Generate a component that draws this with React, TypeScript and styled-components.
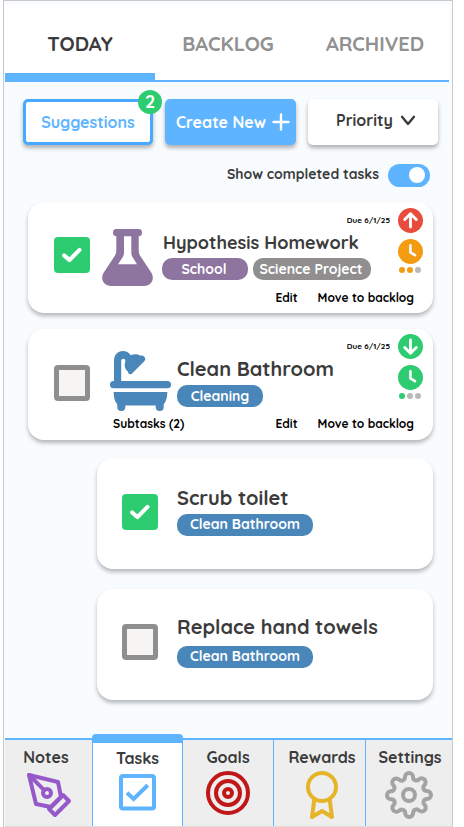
import React from 'react';
import styled, { createGlobalStyle } from 'styled-components';

const c = {
  blue: '#5eb4ff',
  blueEdge: '#47a9ff',
  page: '#f8fcff',
  ink: '#3b3b3b',
  muted: '#919191',
  green: '#2ecc71',
  red: '#e74c3c',
  orange: '#f39c12',
  purple: '#8e759f',
  steel: '#4986b9',
  tagGray: '#908e8f',
  dot: '#b9b9b9',
};

const GlobalStyle = createGlobalStyle`
  * { box-sizing: border-box; }
  body { margin: 0; background: #fff; }
  button { font: inherit; color: inherit; border: 0; padding: 0; background: none; }
  svg { display: block; flex: none; }
`;

const Frame = styled.div`
  display: flex;
  flex-direction: column;
  width: 450px;
  height: 827px;
  margin-left: 3px;
  border: 1px solid #c9c9cb;
  border-bottom-color: #dcdcdc;
  padding-left: 1px;
  background: ${c.page};
  color: ${c.ink};
  font-family: Quicksand, Lato, sans-serif;
  font-weight: 700;
  overflow: hidden;
`;

const Tabs = styled.nav`
  display: grid;
  grid-template-columns: 150px 147px 147px;
  flex: none;
  width: 444px;
  height: 78px;
  margin-top: 3px;
  background: #fff;
`;

const Tab = styled.button<{ $active?: boolean }>`
  padding-top: ${p => (p.$active ? 10 : 8)}px;
  padding-right: ${p => (p.$active ? 0 : 1)}px;
  padding-bottom: ${p => (p.$active ? 0 : 5)}px;
  border-bottom: ${p => (p.$active ? 9 : 2)}px solid ${c.blue};
  font-size: 20px;
  line-height: 25px;
  color: ${p => (p.$active ? c.ink : c.muted)};
`;

const Toolbar = styled.div`
  display: flex;
  gap: 12px;
  flex: none;
  padding: 17px 0 0 18px;
`;

const ToolButton = styled.button<{ $kind: 'outline' | 'solid' | 'plain' }>`
  position: relative;
  display: flex;
  align-items: center;
  justify-content: center;
  width: ${p => (p.$kind === 'solid' ? 131 : 130)}px;
  height: 46px;
  padding-bottom: ${p => (p.$kind === 'plain' ? 4 : 0)}px;
  padding-left: ${p => (p.$kind === 'plain' ? 6 : p.$kind === 'solid' ? 5 : 0)}px;
  gap: ${p => (p.$kind === 'solid' ? 6 : 7)}px;
  border-radius: 5px;
  border: ${p => (p.$kind === 'outline' ? `3px solid ${c.blueEdge}` : '0')};
  background: ${p => (p.$kind === 'solid' ? c.blue : '#fff')};
  color: ${p => (p.$kind === 'solid' ? '#fff' : p.$kind === 'outline' ? c.blue : c.ink)};
  box-shadow: 0 3px 4px rgba(0, 0, 0, 0.3);
  font-size: 16px;
  line-height: 20px;
  white-space: nowrap;
`;

const Count = styled.span`
  position: absolute;
  top: -12px;
  right: -12px;
  width: 24px;
  height: 24px;
  border-radius: 50%;
  background: ${c.green};
  color: #fff;
  font-size: 18px;
  line-height: 23px;
  text-align: center;
`;

const Filter = styled.label`
  display: flex;
  align-items: center;
  justify-content: flex-end;
  flex: none;
  gap: 9px;
  height: 23px;
  margin: 19px 22px 0 0;
  font-size: 14px;
  line-height: 18px;
  & > span { padding-bottom: 3px; }
`;

const Switch = styled.button`
  display: flex;
  align-items: center;
  justify-content: flex-end;
  width: 42px;
  height: 23px;
  padding: 0 5px 1px 0;
  border-radius: 12px;
  background: ${c.blue};
  &::after {
    content: '';
    width: 16px;
    height: 16px;
    border-radius: 50%;
    background: #fff;
  }
`;

const List = styled.main`
  display: flex;
  flex-direction: column;
  align-items: flex-end;
  flex: 1;
  padding: 15px 19px 0 0;
`;

const Card = styled.article<{ $sub?: boolean; $gap?: number }>`
  display: flex;
  flex-direction: column;
  flex: none;
  width: ${p => (p.$sub ? 336 : 405)}px;
  height: 111px;
  margin-bottom: ${p => p.$gap ?? 0}px;
  border-radius: 16px;
  background: #fff;
  box-shadow: 0 3px 4px rgba(0, 0, 0, 0.27);
`;

const CardMain = styled.div<{ $sub?: boolean; $h?: number }>`
  display: flex;
  align-items: flex-start;
  flex: none;
  height: ${p => p.$h ?? 88}px;
  padding: 0 10px 0 ${p => (p.$sub ? 25 : 26)}px;
`;

const Check = styled.button<{ $on?: boolean; $top: number }>`
  flex: none;
  width: 36px;
  height: 36px;
  margin-top: ${p => p.$top}px;
  border-radius: 4px;
  border: ${p => (p.$on ? '0' : '5px solid #8f8f8f')};
  background: ${p => (p.$on ? c.green : '#f6f5f4')};
`;

const Glyph = styled.div<{ $top: number; $left: number }>`
  flex: none;
  margin: ${p => p.$top}px 0 0 ${p => p.$left}px;
`;

const Body = styled.div<{ $top: number; $left: number }>`
  flex: none;
  margin: ${p => p.$top}px 0 0 ${p => p.$left}px;
`;

const Title = styled.h2<{ $size?: number; $h: number; $indent?: number }>`
  height: ${p => p.$h}px;
  margin: 0;
  padding-left: ${p => p.$indent ?? 0}px;
  font-size: ${p => p.$size ?? 20}px;
  line-height: 1.25;
  font-weight: 700;
  white-space: nowrap;
`;

const TagRow = styled.div`
  display: flex;
  gap: 5px;
`;

const Tag = styled.span<{ $w: number; $color: string; $shift?: number; $lift?: number }>`
  width: ${p => p.$w}px;
  height: 22px;
  padding-right: ${p => p.$shift ?? 0}px;
  border-radius: 10px;
  background: ${p => p.$color};
  color: #fff;
  font-size: 14px;
  line-height: ${p => 22 - (p.$lift ?? 0)}px;
  text-align: center;
  white-space: nowrap;
`;

const Side = styled.div<{ $top: number }>`
  display: flex;
  align-items: flex-start;
  gap: 8px;
  margin: ${p => p.$top}px 0 0 auto;
`;

const Due = styled.span`
  width: 0;
  display: flex;
  justify-content: flex-end;
  margin-top: 7px;
  font-size: 8px;
  line-height: 10px;
  color: #000;
  white-space: nowrap;
`;

const Meters = styled.div`
  display: flex;
  flex-direction: column;
  align-items: center;
  gap: 6px;
  width: 25px;
`;

const Dots = styled.div`
  display: flex;
  gap: 2px;
  margin: -3px 1px 0 0;
`;

const Dot = styled.i<{ $color: string }>`
  width: 6px;
  height: 6px;
  border-radius: 50%;
  background: ${p => p.$color};
`;

const Actions = styled.div`
  display: flex;
  justify-content: flex-end;
  gap: 20px;
  padding: 0 19px 0 85px;
  font-size: 12px;
  line-height: 15px;
  color: #000;
  & > :first-child:nth-last-child(3) { margin-right: auto; }
`;

const BottomNav = styled.nav`
  display: grid;
  grid-template-columns: 87px 91px 91px 92px 86px;
  align-items: end;
  flex: none;
  height: 92px;
`;

const NavItem = styled.button<{ $active?: boolean; $line?: boolean }>`
  display: flex;
  flex-direction: column;
  align-items: center;
  height: ${p => (p.$active ? 92 : 88)}px;
  padding-top: ${p => (p.$active ? 5 : 7)}px;
  border-top: ${p => (p.$active ? 9 : 2)}px solid ${c.blue};
  border-right: ${p => (p.$line ? `1px solid ${c.blue}` : '0')};
  border-left: ${p => (p.$active ? `1px solid ${c.blue}` : '0')};
  border-radius: ${p => (p.$active ? '4px 4px 0 0' : '0')};
  background: ${p => (p.$active ? '#fff' : '#eee')};
  font-size: 16px;
  line-height: 20px;
`;

const NavLabel = styled.span<{ $x?: number }>`
  padding-left: ${p => Math.max(p.$x ?? 0, 0)}px;
  padding-right: ${p => Math.max(-(p.$x ?? 0), 0)}px;
`;

const NavIcon = styled.div<{ $top: number; $x?: number }>`
  margin-top: ${p => p.$top}px;
  padding-left: ${p => p.$x ?? 0}px;
`;

const CheckMark = () => (
  <svg width="36" height="36" fill="none" stroke="#fff" strokeWidth="4.1" strokeLinecap="round" strokeLinejoin="round">
    <path d="M10.2 18.4 15.4 23.1 25.5 12.9" />
  </svg>
);

const CheckBox = ({ on, top }: { on?: boolean; top: number }) => (
  <Check $on={on} $top={top}>{on && <CheckMark />}</Check>
);

const Flask = () => (
  <svg width="51" height="57" fill={c.purple}>
    <rect x="11" y="0" width="29" height="7.2" rx="3.4" />
    <path
      fillRule="evenodd"
      d="M14.3 4V22Q14.3 24.3 13 26.4L1.8 43.5C-2.2 50 1.6 57 9 57H42C49.4 57 53.2 50 49.2 43.5L38 26.4Q36.7 24.3 36.7 22V4ZM22 7H29.3V23.5Q29.3 26 30.5 28L35 35.3H16L20.8 28Q22 26 22 23.5Z"
    />
  </svg>
);

const Bath = () => (
  <svg width="61" height="60" fill={c.steel}>
    <rect x="0" y="30" width="61" height="7.3" rx="3.6" />
    <path d="M3.7 41H57.3C57.3 46.5 56 51 53.7 53V56A4 4 0 0 1 45.7 56V54.6H15.3V56A4 4 0 0 1 7.3 56V53C5 51 3.7 46.5 3.7 41Z" />
    <path d="M4 31V10C4 3.8 7.8 0 12.8 0C16.4 0 19 1.5 20.8 4.2C24 3 27.5 2.9 30.4 4.8C32.5 3.8 35.3 5.8 35.3 8C35.3 9 34.8 9.7 34 10.4L21.8 22.7C20.3 24 18 23.2 18 20.6C14.6 18.4 14.2 14 15.3 10.8V9.6C15.2 7 11.2 6.9 11.2 10V31Z" />
  </svg>
);

const PriorityArrow = ({ up }: { up?: boolean }) => (
  <svg width="25" height="25" fill="none" stroke="#fff" strokeWidth="2.9" strokeLinecap="round" strokeLinejoin="round">
    <circle cx="12.5" cy="12.5" r="12.5" fill={up ? c.red : c.green} stroke="none" />
    <path d={up ? 'M12.5 19V5.7M6.7 11.5 12.5 5.7 18.3 11.5' : 'M12.5 6V19.3M6.7 13.5 12.5 19.3 18.3 13.5'} />
  </svg>
);

const Clock = ({ color }: { color: string }) => (
  <svg width="25" height="25" fill="none" stroke="#fff" strokeWidth="2.6" strokeLinecap="round" strokeLinejoin="round">
    <circle cx="12.5" cy="12.5" r="12.5" fill={color} stroke="none" />
    <path d="M12.4 6.2V13.4L17 16.2" />
  </svg>
);

const Status = ({ top, up, effort, color }: { top: number; up?: boolean; effort: number; color: string }) => (
  <Side $top={top}>
    <Due>Due 6/1/25</Due>
    <Meters>
      <PriorityArrow up={up} />
      <Clock color={color} />
      <Dots>
        {[0, 1, 2].map(i => <Dot key={i} $color={i < effort ? color : c.dot} />)}
      </Dots>
    </Meters>
  </Side>
);

const LineIcon = ({ color, children }: { color: string; children: React.ReactNode }) => (
  <svg width="48" height="48" viewBox="0 0 24 24" fill="none" stroke={color} strokeWidth="2" strokeLinecap="round" strokeLinejoin="round">
    {children}
  </svg>
);

export default function App() {
  return (
    <>
      <GlobalStyle />
      <Frame>
        <Tabs>
          <Tab $active>TODAY</Tab>
          <Tab>BACKLOG</Tab>
          <Tab>ARCHIVED</Tab>
        </Tabs>
        <Toolbar>
          <ToolButton $kind="outline">Suggestions<Count>2</Count></ToolButton>
          <ToolButton $kind="solid">
            Create New
            <svg width="18" height="18" stroke="#fff" strokeWidth="2.4" strokeLinecap="round"><path d="M9 1.5V16.5M1.5 9H16.5" /></svg>
          </ToolButton>
          <ToolButton $kind="plain">
            Priority
            <svg width="16" height="11" fill="none" stroke={c.ink} strokeWidth="2.4" strokeLinecap="round" strokeLinejoin="round"><path d="M2 1.8 8 8.9 14 1.8" /></svg>
          </ToolButton>
        </Toolbar>
        <Filter>
          <span>Show completed tasks</span>
          <Switch aria-label="Show completed tasks" />
        </Filter>
        <List>
          <Card $gap={16}>
            <CardMain>
              <CheckBox on top={35} />
              <Glyph $top={27} $left={12}><Flask /></Glyph>
              <Body $top={30} $left={9}>
                <Title $size={18} $h={26} $indent={1}>Hypothesis Homework</Title>
                <TagRow>
                  <Tag $w={86} $color={c.purple} $shift={2}>School</Tag>
                  <Tag $w={118} $color={c.tagGray} $shift={2}>Science Project</Tag>
                </TagRow>
              </Body>
              <Status top={6} up effort={2} color={c.orange} />
            </CardMain>
            <Actions><button>Edit</button><button>Move to backlog</button></Actions>
          </Card>
          <Card $gap={18}>
            <CardMain $h={87}>
              <CheckBox top={36} />
              <Glyph $top={22} $left={20}><Bath /></Glyph>
              <Body $top={27} $left={6}>
                <Title $h={29}>Clean Bathroom</Title>
                <TagRow><Tag $w={86} $color={c.steel}>Cleaning</Tag></TagRow>
              </Body>
              <Status top={5} effort={1} color={c.green} />
            </CardMain>
            <Actions><button>Subtasks (2)</button><button>Edit</button><button>Move to backlog</button></Actions>
          </Card>
          <Card $sub $gap={20}>
            <CardMain $sub>
              <CheckBox on top={36} />
              <Body $top={27} $left={19}>
                <Title $h={29}>Scrub toilet</Title>
                <TagRow><Tag $w={136} $color={c.steel} $lift={1}>Clean Bathroom</Tag></TagRow>
              </Body>
            </CardMain>
          </Card>
          <Card $sub>
            <CardMain $sub>
              <CheckBox top={35} />
              <Body $top={25} $left={19}>
                <Title $h={32}>Replace hand towels</Title>
                <TagRow><Tag $w={136} $color={c.steel} $lift={1}>Clean Bathroom</Tag></TagRow>
              </Body>
            </CardMain>
          </Card>
        </List>
        <BottomNav>
          <NavItem>
            <NavLabel $x={-5}>Notes</NavLabel>
            <NavIcon $top={4}>
              <LineIcon color="#9559c9">
                <path d="M12 19l7-7 3 3-7 7-3-3z" />
                <path d="M18 13l-1.5-7.5L2 2l3.5 14.5L13 18l5-5z" />
                <path d="M2 2l7.586 7.586" />
                <circle cx="11" cy="11" r="2" />
              </LineIcon>
            </NavIcon>
          </NavItem>
          <NavItem $active $line>
            <NavLabel>Tasks</NavLabel>
            <NavIcon $top={6}>
              <svg width="37" height="37" fill="none" stroke={c.blue} strokeWidth="4">
                <rect x="2" y="2" width="33" height="32.5" rx="2" />
                <path d="M8 18.7 14.6 25 28.7 11.2" />
              </svg>
            </NavIcon>
          </NavItem>
          <NavItem $line>
            <NavLabel>Goals</NavLabel>
            <NavIcon $top={2}>
              <LineIcon color="#c01818">
                <circle cx="12" cy="12" r="10" />
                <circle cx="12" cy="12" r="6" />
                <circle cx="12" cy="12" r="2" />
              </LineIcon>
            </NavIcon>
          </NavItem>
          <NavItem $line>
            <NavLabel $x={5}>Rewards</NavLabel>
            <NavIcon $top={4} $x={4}>
              <LineIcon color="#e6b429">
                <circle cx="12" cy="8" r="7" />
                <path d="M8.21 13.89 7 23l5-3 5 3-1.21-9.12" />
              </LineIcon>
            </NavIcon>
          </NavItem>
          <NavItem>
            <NavLabel $x={2}>Settings</NavLabel>
            <NavIcon $top={4}>
              <LineIcon color="#a3a3a3">
                <circle cx="12" cy="12" r="3" />
                <path d="M19.4 15a1.65 1.65 0 0 0 .33 1.82l.06.06a2 2 0 0 1 0 2.83 2 2 0 0 1-2.83 0l-.06-.06a1.65 1.65 0 0 0-1.82-.33 1.65 1.65 0 0 0-1 1.51V21a2 2 0 0 1-2 2 2 2 0 0 1-2-2v-.09A1.65 1.65 0 0 0 9 19.4a1.65 1.65 0 0 0-1.82.33l-.06.06a2 2 0 0 1-2.83 0 2 2 0 0 1 0-2.83l.06-.06a1.65 1.65 0 0 0 .33-1.82 1.65 1.65 0 0 0-1.51-1H3a2 2 0 0 1-2-2 2 2 0 0 1 2-2h.09A1.65 1.65 0 0 0 4.6 9a1.65 1.65 0 0 0-.33-1.82l-.06-.06a2 2 0 0 1 0-2.83 2 2 0 0 1 2.83 0l.06.06a1.65 1.65 0 0 0 1.82.33H9a1.65 1.65 0 0 0 1-1.51V3a2 2 0 0 1 2-2 2 2 0 0 1 2 2v.09a1.65 1.65 0 0 0 1 1.51 1.65 1.65 0 0 0 1.82-.33l.06-.06a2 2 0 0 1 2.83 0 2 2 0 0 1 0 2.83l-.06.06a1.65 1.65 0 0 0-.33 1.82V9a1.65 1.65 0 0 0 1.51 1H21a2 2 0 0 1 2 2 2 2 0 0 1-2 2h-.09a1.65 1.65 0 0 0-1.51 1z" />
              </LineIcon>
            </NavIcon>
          </NavItem>
        </BottomNav>
      </Frame>
    </>
  );
}
